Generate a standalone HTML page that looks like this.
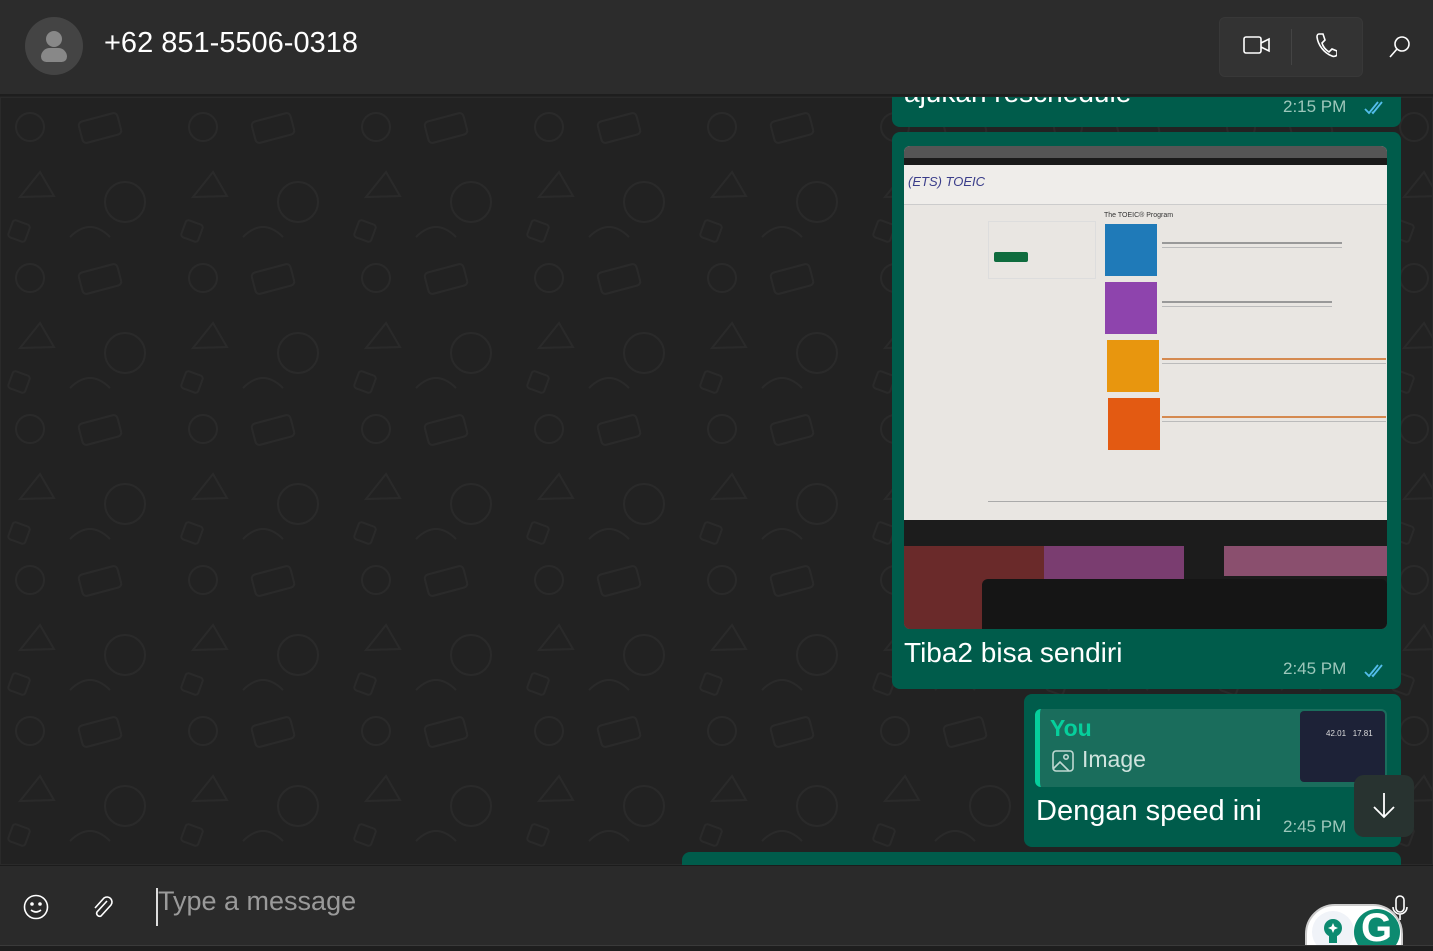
<!DOCTYPE html>
<html><head><meta charset="utf-8"><style>
*{margin:0;padding:0;box-sizing:border-box}
html,body{width:1433px;height:951px;overflow:hidden}
body{background:#232323;font-family:"Segoe UI","Liberation Sans",sans-serif;position:relative;color:#fff}
.hdr{position:absolute;left:0;top:0;width:1433px;height:96px;background:#2c2c2c;border-bottom:2px solid #1e1e1e}
.chat{position:absolute;left:0;top:97px;width:1433px;height:768px;background:#222;overflow:hidden}
.b{position:absolute;background:#005c4b;border-radius:8px}
.t{position:absolute;font-size:17px;color:#9dc7bb}
.inp{position:absolute;left:0;top:865px;width:1433px;height:80px;background:#2a2a2a;border-top:1px solid #1c1c1c;overflow:hidden}
.bot{position:absolute;left:0;top:945px;width:1433px;height:6px;background:#1e1e1e;border-top:1px solid #3a3a3a}
</style></head><body>
<div class="chat">
<svg width="1433" height="768" style="position:absolute;left:0;top:0;opacity:.035" stroke="#fff" fill="none" stroke-width="2">
<defs><pattern id="p" width="173" height="151" patternUnits="userSpaceOnUse">
<circle cx="30" cy="30" r="14"/><rect x="80" y="20" width="40" height="22" rx="4" transform="rotate(-15 100 31)"/><path d="M20 100 l20 -25 l14 24 z"/><circle cx="125" cy="105" r="20"/><path d="M70 140 q20 -20 40 0"/><rect x="10" y="125" width="18" height="18" rx="3" transform="rotate(20 19 134)"/></pattern></defs>
<rect width="1433" height="768" fill="url(#p)"/></svg>
<div class="b" style="left:892px;top:-30px;width:509px;height:60px"></div>
<div style="position:absolute;left:904px;top:-20px;font-size:28px">ajukan reschedule</div>
<div class="t" style="left:1283px;top:0px">2:15 PM</div>
<svg style="position:absolute;left:1364px;top:3px" width="24" height="16"><path d="M1 9l4 4 9-11M8 12l1 1 9-11" stroke="#53bdeb" stroke-width="1.8" fill="none"/></svg>

<div class="b" style="left:892px;top:35px;width:509px;height:557px"></div>
<div style="position:absolute;left:904px;top:49px;width:483px;height:483px;border-radius:6px;overflow:hidden;background:#e9e6e2">
 <div style="position:absolute;left:0;top:0;width:483px;height:12px;background:#555"></div>
 <div style="position:absolute;left:0;top:12px;width:483px;height:7px;background:#1a1a1a"></div>
 <div style="position:absolute;left:0;top:19px;width:483px;height:40px;background:#efedea;border-bottom:1px solid #ccc"></div>
 <div style="position:absolute;left:4px;top:28px;font-size:13px;color:#3a3d8a;font-style:italic">(ETS) TOEIC</div>
 <div style="position:absolute;left:84px;top:75px;width:108px;height:58px;border:1px solid #ddd"></div>
 <div style="position:absolute;left:90px;top:106px;width:34px;height:10px;background:#0f6c3e;border-radius:2px"></div>
 <div style="position:absolute;left:200px;top:66px;font-size:7px;color:#333">The TOEIC® Program</div>
 <div style="position:absolute;left:201px;top:78px;width:52px;height:52px;background:#1f7ab8"></div>
 <div style="position:absolute;left:201px;top:136px;width:52px;height:52px;background:#8e44ad"></div>
 <div style="position:absolute;left:203px;top:194px;width:52px;height:52px;background:#e8960e"></div>
 <div style="position:absolute;left:204px;top:252px;width:52px;height:52px;background:#e35a12"></div>
 <div style="position:absolute;left:258px;top:96px;width:180px;height:6px;border-top:2px solid #999;border-bottom:1px solid #bbb"></div>
 <div style="position:absolute;left:258px;top:155px;width:170px;height:6px;border-top:2px solid #999;border-bottom:1px solid #bbb"></div>
 <div style="position:absolute;left:258px;top:212px;width:224px;height:6px;border-top:2px solid #d58a50;border-bottom:1px solid #bbb"></div>
 <div style="position:absolute;left:258px;top:270px;width:224px;height:6px;border-top:2px solid #d58a50;border-bottom:1px solid #bbb"></div>
 <div style="position:absolute;left:84px;top:355px;width:399px;height:8px;border-top:1px solid #aaa"></div>
 <div style="position:absolute;left:0;top:374px;width:483px;height:110px;background:#1c1c1c"></div>
 <div style="position:absolute;left:0;top:400px;width:280px;height:83px;background:#6a2a2a"></div>
 <div style="position:absolute;left:140px;top:400px;width:140px;height:40px;background:#7a3d70"></div>
 <div style="position:absolute;left:320px;top:400px;width:163px;height:30px;background:#8a4f6e"></div>
 <div style="position:absolute;left:78px;top:433px;width:405px;height:50px;background:#151515;border-radius:6px 6px 0 0"></div>
</div>
<div style="position:absolute;left:904px;top:540px;font-size:28px">Tiba2 bisa sendiri</div>
<div class="t" style="left:1283px;top:562px">2:45 PM</div>
<svg style="position:absolute;left:1364px;top:566px" width="24" height="16"><path d="M1 9l4 4 9-11M8 12l1 1 9-11" stroke="#53bdeb" stroke-width="1.8" fill="none"/></svg>

<div class="b" style="left:1024px;top:597px;width:377px;height:153px"></div>
<div style="position:absolute;left:1035px;top:612px;width:352px;height:78px;background:#1a6d5c;border-radius:6px;border-left:5px solid #06cf9c;overflow:hidden">
 <div style="position:absolute;left:10px;top:6px;font-size:23px;font-weight:600;color:#06cf9c">You</div>
 <svg style="position:absolute;left:12px;top:41px" width="22" height="22" fill="none" stroke="#bfd8d2" stroke-width="1.6"><rect x="1" y="1" width="20" height="20" rx="3"/><circle cx="14" cy="7" r="2.2"/><path d="M1 19l7-7 9 9"/></svg>
 <div style="position:absolute;left:42px;top:37px;font-size:23px;color:#cfe3de">Image</div>
 <div style="position:absolute;left:260px;top:2px;width:85px;height:71px;background:#1d2237;border-radius:4px;font-size:8px;color:#ddd;padding:18px 0 0 26px">42.01 &nbsp; 17.81</div>
</div>
<div style="position:absolute;left:1036px;top:698px;font-size:29px">Dengan speed ini</div>
<div class="t" style="left:1283px;top:720px">2:45 PM</div>
<div style="position:absolute;left:1354px;top:678px;width:60px;height:62px;background:#283330;border-radius:10px"></div>
<svg style="position:absolute;left:1370px;top:694px" width="28" height="30" fill="none" stroke="#fff" stroke-width="1.8"><path d="M14 2v24M4 16l10 10 10-10"/></svg>
<div class="b" style="left:682px;top:755px;width:719px;height:30px"></div>
</div>

<div class="hdr">
 <div style="position:absolute;left:25px;top:17px;width:58px;height:58px;border-radius:50%;background:#444"></div>
 <div style="position:absolute;left:46px;top:31px;width:16px;height:16px;border-radius:50%;background:#888"></div>
 <div style="position:absolute;left:41px;top:48px;width:26px;height:14px;border-radius:10px 10px 6px 6px;background:#888"></div>
 <div style="position:absolute;left:104px;top:27px;font-size:29px;font-weight:normal">+62 851-5506-0318</div>
 <div style="position:absolute;left:1219px;top:17px;width:144px;height:60px;background:#333;border-radius:6px;border:1px solid #383838"></div>
 <div style="position:absolute;left:1291px;top:29px;width:1px;height:36px;background:#444"></div>
 <svg style="position:absolute;left:1243px;top:35px" width="28" height="20" fill="none" stroke="#fff" stroke-width="1.6"><rect x="1" y="2" width="17" height="16" rx="2"/><path d="M18 8l8-4v12l-8-4"/></svg>
 <svg style="position:absolute;left:1315px;top:32px" width="22" height="26" fill="none" stroke="#fff" stroke-width="1.6"><path d="M4 2l4 0 2 6-3 3c1 4 4 7 7 9l3-3 5 2v4c-1 1-3 2-5 1C9 21 3 13 2 5c0-2 1-3 2-3z"/></svg>
 <svg style="position:absolute;left:1388px;top:35px" width="24" height="24" fill="none" stroke="#fff" stroke-width="1.6"><circle cx="14" cy="9" r="7"/><path d="M9 14l-7 8"/></svg>
</div>

<div class="inp">
 <svg style="position:absolute;left:23px;top:28px" width="26" height="26" fill="none" stroke="#fff" stroke-width="1.6"><circle cx="13" cy="13" r="11.5"/><circle cx="9" cy="10" r="1" fill="#fff"/><circle cx="17" cy="10" r="1" fill="#fff"/><path d="M8 16q5 4 10 0"/></svg>
 <svg style="position:absolute;left:90px;top:28px" width="24" height="26" fill="none" stroke="#fff" stroke-width="1.6"><path d="M17 7L7 18a3 3 0 0 0 4 4l10-11a5 5 0 0 0-7-7L5 14"/></svg>
 <div style="position:absolute;left:156px;top:22px;width:2px;height:38px;background:#ddd"></div>
 <div style="position:absolute;left:158px;top:20px;font-size:27px;color:#9a9a9a">Type a message</div>
 <svg style="position:absolute;left:1391px;top:28px" width="18" height="28" fill="none" stroke="#fff" stroke-width="1.6"><rect x="5" y="2" width="8" height="16" rx="4"/><path d="M2 13a7 7 0 0 0 14 0M9 20v6"/></svg>
 <div style="position:absolute;left:1305px;top:38px;width:98px;height:60px;background:#fff;border-radius:30px 30px 0 0;border:2px solid #ccc"></div>
 <div style="position:absolute;left:1312px;top:45px;width:42px;height:42px;border-radius:50%;background:#f0f3f8"></div>
 <svg style="position:absolute;left:1322px;top:52px" width="22" height="28"><circle cx="11" cy="10" r="9" fill="#0c8a70"/><rect x="7" y="18" width="8" height="7" fill="#0c8a70"/><path d="M11 5l1.5 3.5 3.5 1.5-3.5 1.5L11 15l-1.5-3.5L6 10l3.5-1.5z" fill="#fff"/></svg>
 <div style="position:absolute;left:1354px;top:43px;width:46px;height:46px;border-radius:50%;background:#0c8a70"></div>
 <div style="position:absolute;left:1361px;top:40px;font-size:40px;font-weight:700;color:#fff">G</div>
</div>
<div class="bot"></div>
</body></html>
